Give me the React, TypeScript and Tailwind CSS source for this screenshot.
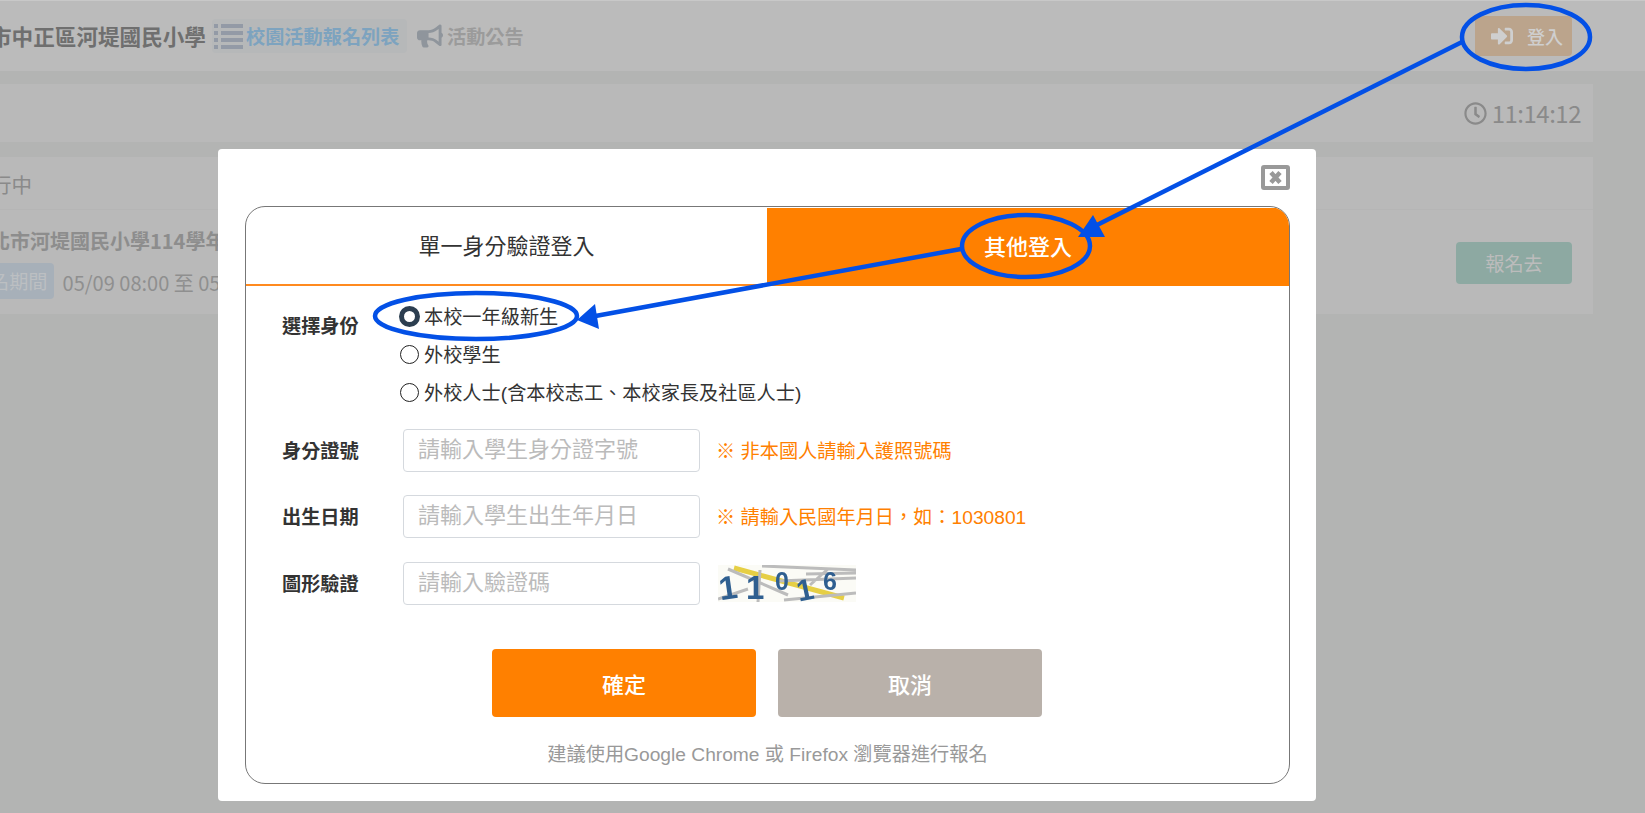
import React from 'react';
import { FaBullhorn, FaSignInAlt, FaRegClock } from 'react-icons/fa';

const sans = { fontFamily: '"Noto Sans CJK TC", sans-serif' };
const formFont = { fontFamily: '"Liberation Sans", "Noto Sans CJK TC", sans-serif' };

const Radio = ({ checked, label }: { checked?: boolean; label: string }) => (
  <label className="flex items-center h-[38px] text-[19.2px] text-[#333]">
    {checked ? (
      <span className="w-[21px] h-[21px] rounded-full border-[5px] border-[#2c3e50] bg-white mr-[4px] ml-[-1px]" />
    ) : (
      <span className="w-[19px] h-[19px] rounded-full border border-[#222] bg-white mr-[5px]" />
    )}
    <span className="pt-[4px]">{label}</span>
  </label>
);

const Field = ({ label, placeholder, hint, children }: { label: string; placeholder: string; hint?: string; children?: React.ReactNode }) => (
  <div className="flex items-center h-[43px]">
    <div className="w-[121px] pt-[3px] text-[19.2px] font-bold text-[#333]">{label}</div>
    <input
      placeholder={placeholder}
      className="w-[297px] h-[43px] pl-[14px] pr-3 pb-[1px] text-[22px] border border-[#d5d9de] rounded placeholder:text-[#bbb] outline-none"
    />
    {hint && <div className="ml-[16px] pt-[3px] text-[19.2px] text-[#ff8000]">{hint}</div>}
    {children}
  </div>
);

const Captcha = () => (
  <svg width="138" height="37" viewBox="0 0 138 37" className="ml-[18px] blur-[0.5px]">
    <rect width="138" height="37" fill="#fbfbf6" />
    <path d="M16 3 L126 33" stroke="#e6cf45" strokeWidth="5" />
    <path d="M44 1 L138 5 M88 9 L138 8 M60 16 L138 13 M0 34 L30 24 M66 35 L138 28 M42 5 L40 37 M10 4 L70 30 M110 4 L92 20" stroke="#bcbcbc" strokeWidth="3" fill="none" />
    <g fill="#2f5f90" fontFamily="Liberation Sans" fontWeight="700">
      <text x="1" y="34" fontSize="33" transform="rotate(-8 10 24)">1</text>
      <text x="28" y="34" fontSize="33">1</text>
      <text x="57" y="25" fontSize="25">0</text>
      <text x="79" y="35" fontSize="30" transform="rotate(-12 88 26)">1</text>
      <text x="105" y="25" fontSize="25">6</text>
    </g>
  </svg>
);

export default function App() {
  return (
    <div className="relative w-full h-[813px] overflow-hidden bg-[#b3b4b3]" style={sans}>
      {/* Header */}
      <div className="h-[71px] bg-[#bbbbbb] border-t border-[#c8c8c8] flex items-center justify-between pr-[73px]">
        <div className="flex items-center ml-[-10px]">
          <span className="text-[21.6px] font-bold text-[#6f6f6f] whitespace-nowrap">市中正區河堤國民小學</span>
          <div className="ml-[6px] h-[34px] w-[195px] bg-[#b6b8b9] rounded flex items-center pl-[2px] font-bold text-[19.2px] text-[#7da3bf]">
            <svg width="29" height="26" viewBox="0 0 29 26" className="mr-[3px]" fill="#939aa6">
              <rect x="0" y="1" width="4" height="4" />
              <rect x="7" y="1" width="22" height="4" />
              <rect x="0" y="8" width="4" height="4" />
              <rect x="7" y="8" width="22" height="4" />
              <rect x="0" y="15" width="4" height="4" />
              <rect x="7" y="15" width="22" height="4" />
              <rect x="0" y="22" width="4" height="4" />
              <rect x="7" y="22" width="22" height="4" />
            </svg>
            校園活動報名列表
          </div>
          <div className="ml-[10px] flex items-center font-bold text-[19.2px] text-[#9b9b9b]">
            <FaBullhorn className="w-[26px] h-[24px] text-[#8f959c] mr-[4px]" /> 活動公告
          </div>
        </div>
        <div className="w-[97px] h-[40px] pl-[6px] rounded bg-[#bba48c] flex items-center justify-center gap-[13px] text-[18px] font-medium text-[#cfcfcf]">
          <FaSignInAlt className="w-[24px] h-[22px]" /> 登入
        </div>
      </div>

      {/* Clock */}
      <div className="mt-[13px] w-[1593px] h-[58px] bg-[#b9b9b9] flex items-center justify-end pr-[12px] text-[24px] tracking-[-0.5px] text-[#8a8a8a]">
        <FaRegClock className="w-[23px] h-[23px] mr-[5px]" /> 11:14:12
      </div>

      {/* Activity panel */}
      <div className="mt-[15px] w-[1593px] h-[157px] bg-[#b9b9b9]">
        <div className="h-[53px] pt-[3px] border-b border-[#b5b5b5] flex items-center ml-[-9px] text-[20.5px] text-[#8a8a8a]">行中</div>
        <div className="flex items-center justify-between pr-[21px] h-[104px]">
          <div className="ml-[-10px] pt-[1px]">
            <div className="text-[20px] font-bold text-[#8d8d8d] whitespace-nowrap">北市河堤國民小學114學年</div>
            <div className="mt-[7px] flex items-center">
              <span className="h-[36px] pr-[6px] bg-[#a7b0b9] rounded text-[19.2px] text-[#bcbfc2] flex items-center">名期間</span>
              <span className="ml-[9px] pt-[3px] text-[20px] text-[#8f8f8f] whitespace-nowrap">05/09 08:00 至 05</span>
            </div>
          </div>
          <div className="w-[116px] h-[42px] mt-[2px] rounded bg-[#8da9a2] flex items-center justify-center text-[19.2px] text-[#bcbcbc]">報名去</div>
        </div>
      </div>

      {/* Login modal */}
      <div className="absolute left-[218px] top-[149px] w-[1098px] h-[652px] bg-white rounded-sm pt-[16px] px-[27px]" style={formFont}>
        <div className="flex justify-end h-[41px] mr-[-1px]">
          <svg width="29" height="25" viewBox="0 0 29 25">
            <rect x="2" y="2" width="25" height="21" rx="1" fill="#fff" stroke="#999" strokeWidth="4" />
            <path d="M10 7.5 L19 17.5 M19 7.5 L10 17.5" stroke="#999" strokeWidth="4.5" />
          </svg>
        </div>
        <div className="w-[1045px] h-[578px] border border-[#777] rounded-[20px] overflow-hidden pt-px">
          <div className="flex h-[78px]">
            <div className="w-[521px] flex items-center justify-center text-[22px] text-[#333] border-b-2 border-[#ff8a1f]">單一身分驗證登入</div>
            <div className="flex-1 flex items-center justify-center text-[22px] font-medium text-white bg-[#ff8000]">其他登入</div>
          </div>
          <div className="pl-[36px] pt-[11px]">
            <div className="flex">
              <div className="w-[118px] pt-[16px] text-[19.2px] font-bold text-[#333]">選擇身份</div>
              <div>
                <Radio checked label="本校一年級新生" />
                <Radio label="外校學生" />
                <Radio label="外校人士(含本校志工、本校家長及社區人士)" />
              </div>
            </div>
            <div className="mt-[18px] flex flex-col gap-[23px]">
              <Field label="身分證號" placeholder="請輸入學生身分證字號" hint="※ 非本國人請輸入護照號碼" />
              <Field label="出生日期" placeholder="請輸入學生出生年月日" hint="※ 請輸入民國年月日，如：1030801" />
              <div className="mt-[1px]">
                <Field label="圖形驗證" placeholder="請輸入驗證碼">
                  <Captcha />
                </Field>
              </div>
            </div>
          </div>
          <div className="mt-[44px] flex justify-center gap-[22px] pr-[1px]">
            <button className="w-[264px] h-[68px] pt-[4px] rounded-sm bg-[#ff8000] text-white text-[22px] font-medium">確定</button>
            <button className="w-[264px] h-[68px] pt-[4px] rounded-sm bg-[#b9b1aa] text-white text-[22px] font-medium">取消</button>
          </div>
          <div className="mt-[24px] text-center text-[19.2px] text-[#999]">建議使用Google Chrome 或 Firefox 瀏覽器進行報名</div>
        </div>
      </div>

      {/* Hand-drawn annotations on top of the screenshot */}
      <svg className="absolute inset-0 pointer-events-none" width="1645" height="813" viewBox="0 0 1645 813" fill="none">
        <g stroke="#0350e6" strokeWidth="4.5">
          <ellipse cx="1526" cy="37" rx="64" ry="32" />
          <ellipse cx="1026" cy="246" rx="64" ry="31" />
          <ellipse cx="476" cy="316" rx="101" ry="23" />
          <path d="M1462 42 L1095 226" />
          <path d="M961 249 L590 317" />
        </g>
        <polygon points="1078,237 1093,215 1105,237" fill="#0350e6" />
        <polygon points="577,320 595,304 599,329" fill="#0350e6" />
      </svg>
    </div>
  );
}
